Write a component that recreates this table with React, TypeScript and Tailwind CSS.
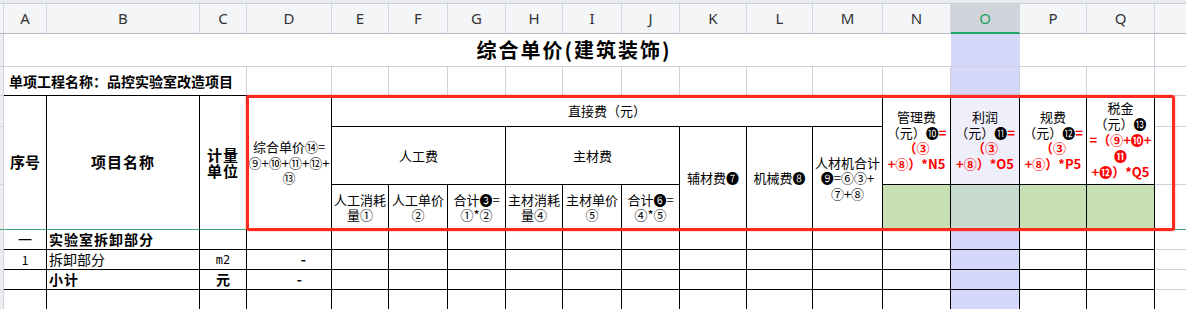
import React from 'react';

const CJK = "font-['Noto_Sans_CJK_SC',sans-serif]";
// 普通网格线 / 表格黑线
const GRAY = 'border-r border-b border-[#cdd1dc]';
const BLACK = 'border-r border-b border-black';
const FREEZE = 'border-r border-b border-r-black border-b-[#3aa56e]';
const HEAD = 'border-r border-b border-r-[#d3d6de] border-b-[#b4b9c8] bg-[#f4f5f7]';

function C({ className = '', children }: { className?: string; children?: React.ReactNode }) {
  return (
    <div className={`flex items-center justify-center text-center box-border overflow-hidden ${className}`}>
      {children}
    </div>
  );
}

const LETTERS = ['A', 'B', 'C', 'D', 'E', 'F', 'G', 'H', 'I', 'J', 'K', 'L', 'M', 'N', 'O', 'P', 'Q'];

const Red = ({ children }: { children: React.ReactNode }) => (
  <span className="text-[#ff0000] font-bold">{children}</span>
);

export default function App() {
  return (
    <div className={`relative w-[1186px] h-[309px] overflow-hidden bg-white text-black ${CJK}`}>
      {/* 顶部标签栏 */}
      <div className="h-[4px] bg-[#e9ebef] border-b border-[#c8ccd6]" />

      <div className="grid grid-cols-[4px_43px_153px_47px_85px_57px_59px_58px_57px_59px_58px_67px_66px_70px_68px_69px_67px_68px_40px] grid-rows-[30px_33px_29px_31px_58px_45px_20px_20px_20px_20px]">
        {/* 列标题 */}
        <C className={`${HEAD} col-start-1 row-start-1`} />
        {LETTERS.map((l) =>
          l === 'O' ? (
            <C
              key={l}
              className="col-start-16 row-start-1 border-r border-b-2 border-r-[#d3d6de] border-b-[#1fa463] bg-[#d1d4da] text-[15px] text-[#1fa463] font-['Noto_Sans',sans-serif]"
            >
              {l}
            </C>
          ) : (
            <C key={l} className={`${HEAD} row-start-1 text-[15px] text-[#333] font-['Noto_Sans',sans-serif]`}>
              {l}
            </C>
          )
        )}
        <C className={`${HEAD} col-start-19 row-start-1 border-r-0`} />

        {/* 标题行 */}
        <C className="col-start-1 row-start-2 border-r border-b border-[#cdd1dc] bg-[#eceef2]" />
        <div className="col-start-16 row-start-2 bg-[#d6d8fb]" />
        <C className={`${GRAY} col-start-2 col-span-17 row-start-2 text-[20px] font-bold tracking-[2px] pr-[10px]`}>
          综合单价(建筑装饰)
        </C>
        <C className="col-start-19 row-start-2 border-b border-[#cdd1dc]" />

        {/* 项目名称行 */}
        <C className="col-start-1 row-start-3 border-r border-b border-[#cdd1dc] bg-[#eceef2]" />
        <C className="col-start-2 col-span-3 row-start-3 border-r border-b border-r-[#cdd1dc] border-b-black justify-start pl-[5px] text-[14px] font-bold">
          单项工程名称：品控实验室改造项目
        </C>
        {[5, 6, 7, 8, 9, 10, 11, 12, 13, 14, 15, 16, 17, 18].map((c) => (
          <div
            key={c}
            style={{ gridColumnStart: c }}
            className={`row-start-3 border-r border-b border-r-[#cdd1dc] border-b-black ${c === 16 ? 'bg-[#d6d8fb]' : ''}`}
          />
        ))}
        <C className="col-start-19 row-start-3 border-b border-[#cdd1dc]" />

        {/* 表头 */}
        <C className="col-start-1 row-start-4 border-r border-b border-[#cdd1dc] bg-[#eceef2]" />
        <C className="col-start-1 row-start-5 border-r border-b border-[#cdd1dc] bg-[#eceef2]" />
        <C className="col-start-1 row-start-6 border-r border-b border-r-[#cdd1dc] border-b-[#3aa56e] bg-[#eceef2]" />

        <C className={`${FREEZE} col-start-2 row-start-4 row-span-3 text-[15px] font-bold`}>序号</C>
        <C className={`${FREEZE} col-start-3 row-start-4 row-span-3 text-[15px] font-bold tracking-[1px]`}>项目名称</C>
        <C className={`${FREEZE} col-start-4 row-start-4 row-span-3 text-[15px] font-bold leading-[16px] tracking-[1px]`}>
          计量
          <br />
          单位
        </C>
        <C className={`${FREEZE} col-start-5 row-start-4 row-span-3 text-[13px] leading-[15.5px]`}>
          综合单价⑭=
          <br />
          ⑨+⑩+⑪+⑫+
          <br />
          ⑬
        </C>

        <C className={`${BLACK} col-start-6 col-span-9 row-start-4 text-[13px]`}>直接费（元）</C>
        <C className={`${BLACK} col-start-6 col-span-3 row-start-5 text-[13px]`}>人工费</C>
        <C className={`${BLACK} col-start-9 col-span-3 row-start-5 text-[13px]`}>主材费</C>
        <C className={`${FREEZE} col-start-12 row-start-5 row-span-2 text-[13px]`}>辅材费❼</C>
        <C className={`${FREEZE} col-start-13 row-start-5 row-span-2 text-[13px]`}>机械费❽</C>
        <C className={`${FREEZE} col-start-14 row-start-5 row-span-2 text-[13px] leading-[15.5px]`}>
          人材机合计
          <br />
          ❾=⑥③+
          <br />
          ⑦+⑧
        </C>

        <C className={`${FREEZE} col-start-6 row-start-6 text-[13px] leading-[15.5px]`}>人工消耗<br />量①</C>
        <C className={`${FREEZE} col-start-7 row-start-6 text-[13px] leading-[15.5px]`}>人工单价<br />②</C>
        <C className={`${FREEZE} col-start-8 row-start-6 text-[13px] leading-[15.5px]`}>合计❸=<br />①*②</C>
        <C className={`${FREEZE} col-start-9 row-start-6 text-[13px] leading-[15.5px]`}>主材消耗<br />量④</C>
        <C className={`${FREEZE} col-start-10 row-start-6 text-[13px] leading-[15.5px]`}>主材单价<br />⑤</C>
        <C className={`${FREEZE} col-start-11 row-start-6 text-[13px] leading-[15.5px]`}>合计❻=<br />④*⑤</C>

        <C className={`${BLACK} col-start-15 row-start-4 row-span-2 text-[13px] leading-[15.5px]`}>
          <div>
            管理费
            <br />
            （元）❿<Red>=</Red>
            <br />
            <Red>（③</Red>
            <br />
            <Red>+⑧）*N5</Red>
          </div>
        </C>
        <C className={`${BLACK} col-start-16 row-start-4 row-span-2 bg-[#efeffc] text-[13px] leading-[15.5px]`}>
          <div>
            利润
            <br />
            （元）⓫<Red>=</Red>
            <br />
            <Red>（③</Red>
            <br />
            <Red>+⑧）*O5</Red>
          </div>
        </C>
        <C className={`${BLACK} col-start-17 row-start-4 row-span-2 text-[13px] leading-[15.5px]`}>
          <div>
            规费
            <br />
            （元）⓬<Red>=</Red>
            <br />
            <Red>（③</Red>
            <br />
            <Red>+⑧）*P5</Red>
          </div>
        </C>
        <C className={`${BLACK} col-start-18 row-start-4 row-span-2 text-[13px] leading-[16px]`}>
          <div>
            税金
            <br />
            （元）⓭
            <br />
            <Red>=（⑨+❿+</Red>
            <br />
            <Red>⓫</Red>
            <br />
            <Red>+⓬）*Q5</Red>
          </div>
        </C>
        <C className={`${FREEZE} col-start-15 row-start-6 bg-[#c6e0b4]`} />
        <C className={`${FREEZE} col-start-16 row-start-6 bg-[#c9dbcf]`} />
        <C className={`${FREEZE} col-start-17 row-start-6 bg-[#c6e0b4]`} />
        <C className={`${FREEZE} col-start-18 row-start-6 bg-[#c6e0b4]`} />

        <C className="col-start-19 row-start-4 border-b border-[#cdd1dc]" />
        <C className="col-start-19 row-start-5 border-b border-[#cdd1dc]" />
        <C className="col-start-19 row-start-6 border-b border-[#3aa56e]" />

        {/* 数据行 */}
        {[
          { row: 'row-start-7', a: '一', b: '实验室拆卸部分', bBold: true, c: '', cBold: false, d: '', dPad: '' },
          { row: 'row-start-8', a: '1', b: '拆卸部分', bBold: false, c: 'm2', cBold: false, d: '-', dPad: 'pr-[25px]' },
          { row: 'row-start-9', a: '', b: '小计', bBold: true, c: '元', cBold: true, d: '-', dPad: 'pr-[29px]' },
          { row: 'row-start-10', a: '', b: '', bBold: false, c: '', cBold: false, d: '', dPad: '' },
        ].map((r) => (
          <React.Fragment key={r.row}>
            <C className={`${r.row} col-start-1 border-r border-b border-[#cdd1dc] bg-[#eceef2]`} />
            <C className={`${BLACK} ${r.row} col-start-2 ${r.a === '1' ? 'text-[12px]' : 'text-[14px]'}`}>{r.a}</C>
            <C className={`${BLACK} ${r.row} col-start-3 justify-start pl-[2px] text-[14px] ${r.bBold ? 'font-bold tracking-[1px]' : ''}`}>
              {r.b}
            </C>
            <C className={`${BLACK} ${r.row} col-start-4 ${r.cBold ? 'text-[14px] font-bold' : "text-[12px] font-['DejaVu_Sans_Mono',monospace]"}`}>
              {r.c}
            </C>
            <C className={`${BLACK} ${r.row} col-start-5 justify-end text-[14px] font-bold ${r.dPad}`}>{r.d}</C>
            {[6, 7, 8, 9, 10, 11, 12, 13, 14, 15, 16, 17, 18].map((c) => (
              <div
                key={c}
                style={{ gridColumnStart: c }}
                className={`${BLACK} ${r.row} ${c === 16 ? 'bg-[#d6d8fb]' : ''}`}
              />
            ))}
            <C className={`${r.row} col-start-19 border-b border-[#cdd1dc]`} />
          </React.Fragment>
        ))}
      </div>

      {/* 红色标注框 */}
      <div className="absolute left-[246px] top-[95px] w-[929px] h-[136px] border-[3px] border-[#ff2a1f] rounded-[3px] shadow-[0_0_2px_rgba(255,40,30,0.6)] pointer-events-none" />
    </div>
  );
}
